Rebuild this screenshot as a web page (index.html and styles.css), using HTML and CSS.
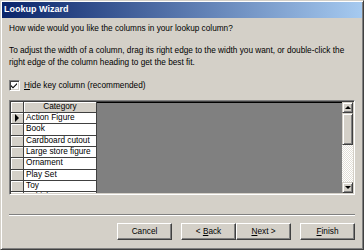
FILE: index.html
```html
<!DOCTYPE html>
<html>
<head>
	<title>Lookup Wizard</title>
	<link rel="stylesheet" href="styles.css">
</head>
<body>
	<div class="window">
		<div class="titlebar">Lookup Wizard</div>

		<div class="content">
			<p class="intro">How wide would you like the columns in your lookup column?</p>
			<p class="help">To adjust the width of a column, drag its right edge to the width you want, or double-click the<br>right edge of the column heading to get the best fit.</p>

			<label class="check">
				<span class="box">
					<svg width="7" height="7" viewBox="0 0 7 7"><path d="M0 3 L2 5 L6 1 L6 2.6 L2 6.6 L0 4.6 Z" fill="#000"/></svg>
				</span>
				<span><u>H</u>ide key column (recommended)</span>
			</label>

			<div class="sheet">
				<div class="cols">
					<div class="sel head"></div>
					<div class="cell head">Category</div>

					<div class="sel"><span class="arrow"></span></div>
					<div class="cell">Action Figure</div>
					<div class="sel"></div>
					<div class="cell">Book</div>
					<div class="sel"></div>
					<div class="cell">Cardboard cutout</div>
					<div class="sel"></div>
					<div class="cell">Large store figure</div>
					<div class="sel"></div>
					<div class="cell">Ornament</div>
					<div class="sel"></div>
					<div class="cell">Play Set</div>
					<div class="sel"></div>
					<div class="cell">Toy</div>
					<div class="sel"></div>
					<div class="cell">Vehicle</div>
				</div>
				<div class="empty"></div>
				<div class="vscroll">
					<div class="sbtn"><span class="up"></span></div>
					<div class="thumb"></div>
					<div class="track"></div>
					<div class="sbtn"><span class="down"></span></div>
				</div>
			</div>

			<div class="sep"></div>

			<div class="buttons">
				<button class="btn">Cancel</button>
				<div class="pair">
					<button class="btn">&lt; <u>B</u>ack</button>
					<button class="btn"><u>N</u>ext &gt;</button>
				</div>
				<button class="btn"><u>F</u>inish</button>
			</div>
		</div>
	</div>
</body>
</html>
```

FILE: styles.css
```css
body {
	margin: 0;
	padding: 0;
	background-color: #d4d0c8;
	font-family: "Liberation Sans", Arial, sans-serif;
	font-size: 8.25px;
	color: #000;
}

.window {
	width: 364px;
	height: 250px;
	box-sizing: border-box;
	background-color: #d4d0c8;
	border-top: 1px solid #d4d0c8;
	border-left: 1px solid #d4d0c8;
	border-right: 1px solid #404040;
	border-bottom: 1px solid #404040;
	box-shadow: inset 1px 1px 0 #fff, inset -1px -1px 0 #808080;
	padding: 1px;
}

.titlebar {
	height: 16px;
	line-height: 15px;
	padding-left: 2px;
	color: #fff;
	font-weight: bold;
	font-size: 9px;
	background: linear-gradient(to right, #0a246a, #a6caf0);
}

.content {
	padding: 0 7px 0 6px;
}

p {
	margin: 0;
	line-height: 12px;
	padding-left: 1px;
	white-space: nowrap;
}

.intro {
	margin-top: 5px;
}

.help {
	margin-top: 10px;
}

.check {
	display: flex;
	align-items: center;
	gap: 4px;
	margin-top: 10px;
	height: 12px;
	padding-left: 1px;
}

.box {
	width: 9px;
	height: 9px;
	background: #fff;
	border-top: 1px solid #808080;
	border-left: 1px solid #808080;
	border-right: 1px solid #fff;
	border-bottom: 1px solid #fff;
	box-shadow: inset 1px 1px 0 #404040, inset -1px -1px 0 #d4d0c8;
	display: flex;
	align-items: center;
	justify-content: center;
}

.sheet {
	margin-top: 9px;
	margin-left: 1px;
	height: 95px;
	box-sizing: border-box;
	display: flex;
	border-top: 1px solid #808080;
	border-left: 1px solid #808080;
	border-right: 1px solid #fff;
	border-bottom: 1px solid #fff;
	box-shadow: inset 1px 1px 0 #404040, inset -1px -1px 0 #d4d0c8;
	padding: 1px;
	overflow: hidden;
}

.cols {
	display: grid;
	grid-template-columns: 13px 73px;
	grid-template-rows: 11px;
	grid-auto-rows: 11.33px;
	align-content: start;
	background: #fff;
	overflow: hidden;
}

.sel {
	background: #d4d0c8;
	border-right: 1px solid #404040;
	border-bottom: 1px solid #404040;
	box-shadow: inset 1px 1px 0 #fff;
	display: flex;
	align-items: center;
	justify-content: center;
}

.cell {
	border-right: 1px solid #404040;
	border-bottom: 1px solid #404040;
	padding-left: 2px;
	line-height: 10px;
	white-space: nowrap;
	overflow: hidden;
}

.cell.head {
	background: #d4d0c8;
	text-align: center;
	padding-left: 0;
	box-shadow: inset 1px 1px 0 #fff;
}

.arrow {
	width: 0;
	height: 0;
	border-top: 4px solid transparent;
	border-bottom: 4px solid transparent;
	border-left: 4px solid #000;
}

.empty {
	flex: 1;
	background: #808080;
	border-top: 1px solid #000;
}

.vscroll {
	width: 11px;
	display: flex;
	flex-direction: column;
	background-color: #f0eee9;
	background-image: repeating-conic-gradient(#fff 0 25%, #e2dfd8 0 50%);
	background-size: 2px 2px;
}

.sbtn,
.thumb {
	background: #d4d0c8;
	box-sizing: border-box;
	border-top: 1px solid #d4d0c8;
	border-left: 1px solid #d4d0c8;
	border-right: 1px solid #404040;
	border-bottom: 1px solid #404040;
	box-shadow: inset 1px 1px 0 #fff, inset -1px -1px 0 #808080;
}

.sbtn {
	height: 11px;
	display: flex;
	align-items: center;
	justify-content: center;
}

.thumb {
	height: 32px;
}

.track {
	flex: 1;
}

.up {
	width: 0;
	height: 0;
	border-left: 3px solid transparent;
	border-right: 3px solid transparent;
	border-bottom: 3px solid #000;
}

.down {
	width: 0;
	height: 0;
	border-left: 3px solid transparent;
	border-right: 3px solid transparent;
	border-top: 3px solid #000;
}

.sep {
	margin-top: 19px;
	margin-left: 1px;
	height: 0;
	border-top: 1px solid #808080;
	border-bottom: 1px solid #fff;
}

.buttons {
	display: flex;
	justify-content: flex-end;
	gap: 9px;
	margin-top: 7px;
}

.pair {
	display: flex;
}

.btn {
	width: 55px;
	height: 17px;
	padding: 0;
	font-family: "Liberation Sans", Arial, sans-serif;
	font-size: 8.25px;
	color: #000;
	background: #d4d0c8;
	border-top: 1px solid #fff;
	border-left: 1px solid #fff;
	border-right: 1px solid #404040;
	border-bottom: 1px solid #404040;
	box-shadow: inset -1px -1px 0 #808080;
	border-radius: 0;
}
```
